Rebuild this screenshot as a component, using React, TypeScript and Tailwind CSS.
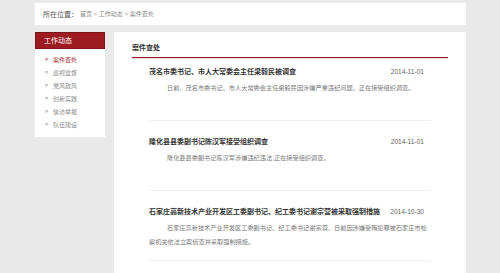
const FONT = '"Liberation Sans", "Noto Sans CJK SC", sans-serif';

const NAV = ["案件查处", "巡视监督", "党风政风", "创新实践", "信访举报", "队伍建设"];

const ARTICLES = [
  {
    title: "茂名市委书记、市人大常委会主任梁毅民被调查",
    date: "2014-11-01",
    summary: "日前，茂名市委书记、市人大常委会主任梁毅民因涉嫌严重违纪问题，正在接受组织调查。",
  },
  {
    title: "隆化县县委副书记陈汉军接受组织调查",
    date: "2014-11-01",
    summary: "隆化县县委副书记陈汉军涉嫌违纪违法,正在接受组织调查。",
  },
  {
    title: "石家庄高新技术产业开发区工委副书记、纪工委书记谢宗营被采取强制措施",
    date: "2014-10-30",
    summary:
      "石家庄高新技术产业开发区工委副书记、纪工委书记谢宗营，日前因涉嫌受贿犯罪被石家庄市检察机关依法立案侦查并采取强制措施。",
  },
];

export default function App() {
  return (
    <div
      className="h-[273px] w-[500px] overflow-hidden bg-[#e9e9e9] pl-[35px] pt-[3px]"
      style={{ fontFamily: FONT }}
    >
      <div className="w-[431px]">
        {/* breadcrumb */}
        <div className="flex h-[22px] items-center bg-white pl-[8px]">
          <span className="text-[7px] leading-none text-[#555]">所在位置：</span>
          <span className="ml-[2px] text-[6px] leading-none text-[#888]">
            首页 &gt; 工作动态 &gt; 案件查处
          </span>
        </div>

        <div className="mt-[7px] flex items-start gap-[9px]">
          {/* sidebar */}
          <aside className="w-[70px] shrink-0">
            <div className="flex h-[17px] items-center border border-[#7e1519] bg-[#9d1c21] pl-[8px] text-[7px] leading-none text-white">
              工作动态
            </div>
            <ul className="bg-white pb-[6px] pt-[4px]">
              {NAV.map((item, i) => (
                <li
                  key={item}
                  className={`flex h-[13px] items-center pl-[10px] text-[6px] leading-none ${
                    i === 0 ? "text-[#a3262b]" : "text-[#8a8a8a]"
                  }`}
                >
                  <span className="w-[8px] text-[5px] font-bold">&gt;</span>
                  {item}
                </li>
              ))}
            </ul>
          </aside>

          {/* main */}
          <main className="flex-1 bg-white px-[18px] pb-[30px] pt-[11px]">
            <h2 className="pb-[4px] text-[7px] font-bold leading-[10px] text-[#333]">
              案件查处
            </h2>
            <div className="h-px bg-[#9b2125]" />
            <div className="h-px bg-[#ead3d4]" />

            <div className="px-[17px]">
              {ARTICLES.map((a, i) => (
                <div
                  key={a.title}
                  className={`border-b border-[#f0f0f0] pb-[11px] ${i === 0 ? "pt-[8px]" : "pt-[16px]"}`}
                >
                  <div className="flex h-[10px] items-center justify-between pr-[7px]">
                    <span className="text-[7px] font-bold leading-[10px] text-[#333]">
                      {a.title}
                    </span>
                    <span className="shrink-0 text-[6.6px] leading-[10px] text-[#666]">
                      {a.date}
                    </span>
                  </div>
                  <p className="mt-[4px] min-h-[28px] indent-[18px] text-[6.2px] leading-[14px] text-[#7a7a7a]">
                    {a.summary}
                  </p>
                </div>
              ))}
            </div>
          </main>
        </div>
      </div>
    </div>
  );
}
